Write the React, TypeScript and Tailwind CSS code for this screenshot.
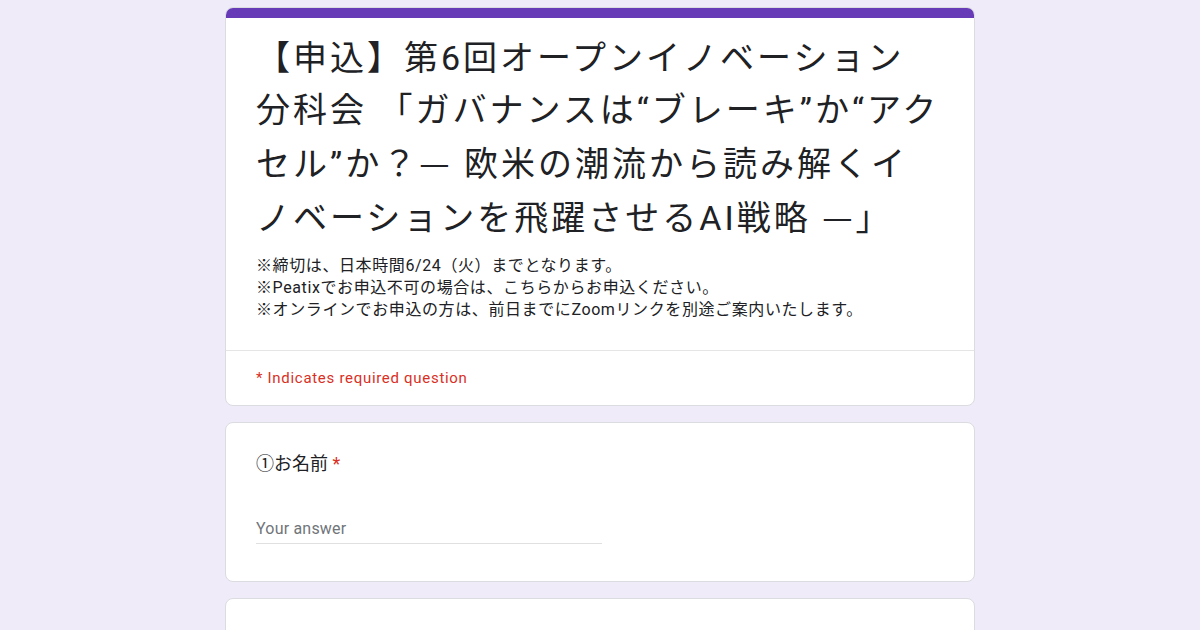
export default function App() {
  const dash = "font-['Noto_Sans_CJK_JP',sans-serif]";
  return (
    <div className="min-h-[630px] bg-[#f0ebf8] font-['Roboto','Noto_Sans_CJK_JP',sans-serif] text-[#202124]">
      <div className="mx-auto flex w-[750px] flex-col gap-4 pt-[7px]">
        {/* Header card */}
        <div className="overflow-hidden rounded-lg border border-[#dadce0] bg-white">
          <div className="h-[10px] bg-[#673ab7]" />
          <div className="border-b border-[#e5e5e5] px-[30px] pb-[29px] pt-[14px]">
            <h1 className="whitespace-nowrap text-[34px] leading-[52px] tracking-[3px] font-normal">
              【申込】第6回オープンイノベーション
              <br />
              分科会 「ガバナンスは“ブレーキ”か“アク
              <br />
              セル”か？<span className={dash}>—</span> 欧米の潮流から読み解くイ
              <br />
              ノベーションを飛躍させるAI戦略 <span className={dash}>—</span>」
            </h1>
            <div className="mt-[11px] text-[16px] leading-[22px] tracking-[0.6px]">
              <p>※締切は、日本時間6/24（火）までとなります。</p>
              <p>※Peatixでお申込不可の場合は、こちらからお申込ください。</p>
              <p>※オンラインでお申込の方は、前日までにZoomリンクを別途ご案内いたします。</p>
            </div>
          </div>
          <div className="px-[30px] py-[16px] text-[15px] leading-[22px] tracking-[0.7px] text-[#d93025]">
            * Indicates required question
          </div>
        </div>

        {/* Name question */}
        <div className="rounded-lg border border-[#dadce0] bg-white px-[30px] pb-[37px] pt-[29px]">
          <div className="text-[18px] leading-[24px]">
            ①お名前 <span className="text-[#d93025]">*</span>
          </div>
          <div className="mt-[41px] w-[346px] border-b border-[#e0e0e0] pb-[2px]">
            <input
              type="text"
              placeholder="Your answer"
              className="w-full bg-transparent text-[16px] leading-[24px] tracking-[0.2px] outline-none placeholder:text-[#70757a]"
            />
          </div>
        </div>

        {/* Next question (cut off) */}
        <div className="h-[60px] rounded-lg border border-[#dadce0] bg-white" />
      </div>
    </div>
  );
}
